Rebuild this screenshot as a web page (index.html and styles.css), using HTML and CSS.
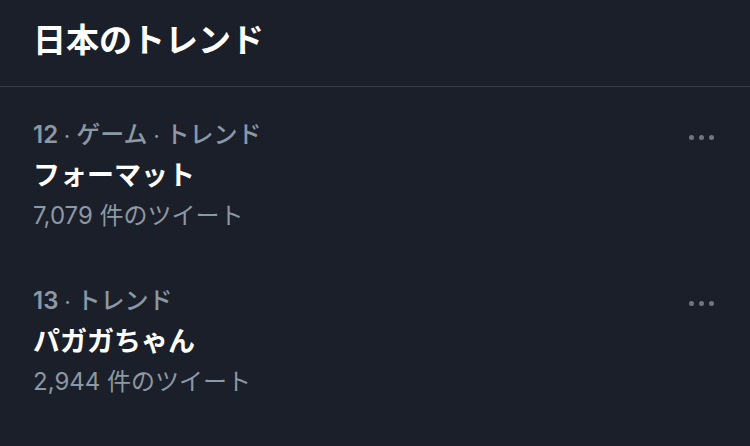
FILE: index.html
```html
<!DOCTYPE html>
<html lang="ja">
<head>
    <meta charset="UTF-8">
    <meta name="viewport" content="width=device-width, initial-scale=1.0">
    <title>日本のトレンド</title>
    <link rel="stylesheet" href="styles.css">
</head>
<body>

    <div class="header">
        <h1>日本のトレンド</h1>
    </div>

    <div class="trend">
        <div class="trend-body">
            <div class="trend-meta"><span class="rank">12</span><span class="sep">·</span>ゲーム<span class="sep">·</span>トレンド</div>
            <div class="trend-name">フォーマット</div>
            <div class="trend-count">7,079 件のツイート</div>
        </div>
        <div class="more"><span></span><span></span><span></span></div>
    </div>

    <div class="trend">
        <div class="trend-body">
            <div class="trend-meta"><span class="rank">13</span><span class="sep">·</span>トレンド</div>
            <div class="trend-name">パガガちゃん</div>
            <div class="trend-count">2,944 件のツイート</div>
        </div>
        <div class="more"><span></span><span></span><span></span></div>
    </div>

</body>
</html>
```

FILE: styles.css
```css
body {
    margin: 0;
    padding: 0;
    background-color: #1a1f29;
    font-family: Inter, "Noto Sans CJK JP", sans-serif;
    color: #fff;
    height: 446px;
    overflow: hidden;
}

.header {
    height: 86px;
    border-bottom: 1px solid #3a3f47;
    padding: 0 33px;
}

.header h1 {
    margin: 0;
    padding-top: 16px;
    font-size: 33px;
    line-height: 48px;
    font-weight: 700;
}

.trend {
    display: flex;
    justify-content: space-between;
    align-items: flex-start;
    padding: 30px 36px 0 33px;
    height: 136px;
}

.trend-meta {
    font-size: 24px;
    line-height: 30px;
    color: #8b98a5;
    font-weight: 500;
    margin-top: 3px;
}

.trend-meta .rank {
    font-size: 24px;
    font-weight: 600;
}

.trend-meta .sep {
    font-size: 20px;
    margin: 0 6px;
}

.trend-name {
    font-size: 27px;
    line-height: 40px;
    font-weight: 700;
    margin-top: 5px;
}

.trend-count {
    font-size: 24px;
    line-height: 36px;
    color: #8b98a5;
    margin-top: 2px;
}

.more {
    display: flex;
    gap: 5px;
    margin-top: 18px;
}

.more span {
    width: 5px;
    height: 5px;
    border-radius: 50%;
    background-color: #6e7781;
}
```
